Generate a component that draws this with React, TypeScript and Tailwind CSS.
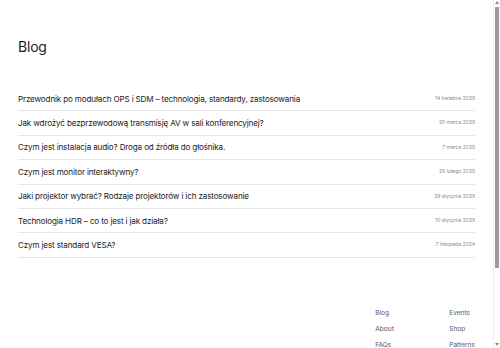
import React from "react";

const posts = [
  ["Przewodnik po modułach OPS i SDM – technologia, standardy, zastosowania", "14 kwietnia 2025"],
  ["Jak wdrożyć bezprzewodową transmisję AV w sali konferencyjnej?", "20 marca 2025"],
  ["Czym jest instalacja audio? Droga od źródła do głośnika.", "7 marca 2025"],
  ["Czym jest monitor interaktywny?", "25 lutego 2025"],
  ["Jaki projektor wybrać? Rodzaje projektorów i ich zastosowanie", "29 stycznia 2025"],
  ["Technologia HDR – co to jest i jak działa?", "10 stycznia 2025"],
  ["Czym jest standard VESA?", "7 listopada 2024"],
];

export default function App() {
  return (
    <div className="relative h-[348px] overflow-hidden bg-white text-[#1e1e1e]" style={{ fontFamily: "Inter, 'Noto Sans', sans-serif" }}>
      <div className="pl-[18px] pr-[25px] pb-[90px]">
        <h1 className="pt-[38px] text-[14px] leading-[18px] font-normal tracking-[-0.2px]">Blog</h1>
        <ul className="mt-[31px]">
          {posts.map(([t, d], i) => (
            <li key={i} className="flex items-center justify-between h-[24.4px] border-b border-[#e5e5e5]">
              <span className="text-[8.1px] tracking-[-0.15px] text-[#222]">{t}</span>
              <span className="text-[5px] text-[#888]">{d}</span>
            </li>
          ))}
        </ul>
        <footer className="mt-[51px] flex justify-end">
          <div className="grid grid-cols-[74px_auto] gap-y-[7px] text-[6.6px] leading-[9px] text-[#5a5a5a]">
            <span>Blog</span><span>Events</span>
            <span>About</span><span>Shop</span>
            <span>FAQs</span><span>Patterns</span>
          </div>
        </footer>
      </div>
      {/* scrollbar */}
      <div className="absolute top-0 right-0 bottom-0 w-[7px] border-l border-[#ececec] bg-white">
        <div className="absolute top-[1px] left-[1px] text-[4px] leading-[4px] text-[#888]">▲</div>
        <div className="absolute top-[7px] left-[1px] w-[3.5px] h-[261px] bg-[#9c9c9c]" />
        <div className="absolute bottom-[1px] left-[1px] text-[4px] leading-[4px] text-[#888]">▼</div>
      </div>
    </div>
  );
}
